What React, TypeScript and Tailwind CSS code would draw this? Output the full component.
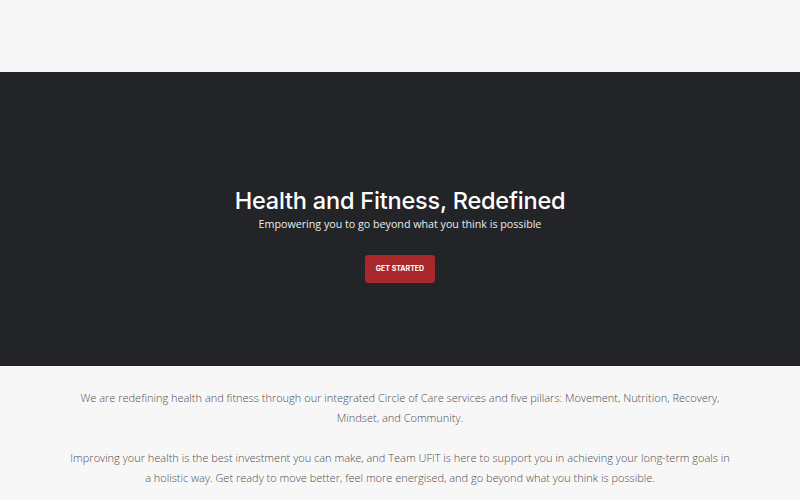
export default function App() {
  return (
    <div className="min-h-[500px] w-full bg-[#f7f7f7]" style={{ fontFamily: '"Open Sans", sans-serif' }}>
      <header className="h-[72px] bg-[#f7f7f7]" />
      <section className="flex h-[294px] flex-col items-center bg-[#222428] pt-[114px]">
        <h1 className="text-[23.5px] leading-[30px] font-medium tracking-[-0.2px] text-white" style={{ fontFamily: 'Inter, sans-serif' }}>
          Health and Fitness, Redefined
        </h1>
        <p className="text-[10.7px] leading-[16px] text-[#ececec]">
          Empowering you to go beyond what you think is possible
        </p>
        <button className="mt-[23px] h-[28px] w-[70px] rounded-[3px] bg-[#a8282b] text-[7px] font-bold text-white" style={{ fontFamily: 'Inter, sans-serif' }}>
          GET STARTED
        </button>
      </section>
      <section className="flex flex-col items-center gap-[20px] px-[50px] pt-[22px] text-center text-[11px] leading-[20px] font-light text-[#4f4f4f]">
        <p>
          We are redefining health and fitness through our integrated Circle of Care services and five pillars: Movement, Nutrition, Recovery,
          <br />
          Mindset, and Community.
        </p>
        <p>
          Improving your health is the best investment you can make, and Team UFIT is here to support you in achieving your long-term goals in
          <br />
          a holistic way. Get ready to move better, feel more energised, and go beyond what you think is possible.
        </p>
      </section>
    </div>
  );
}
